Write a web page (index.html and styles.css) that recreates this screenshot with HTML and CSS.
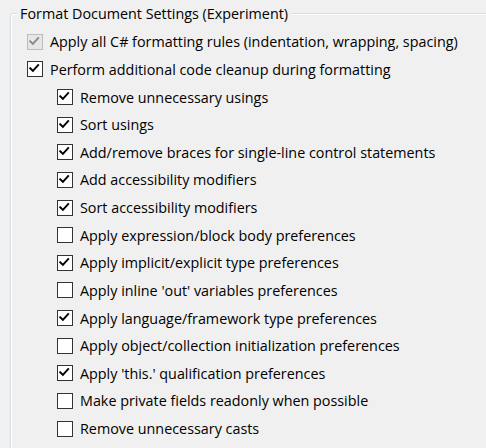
FILE: index.html
```html
<!DOCTYPE html>
<html>
<head>
<meta charset="utf-8">
<link rel="stylesheet" href="styles.css">
</head>
<body>
<fieldset class="group">
  <legend class="group-title">Format Document Settings (Experiment)</legend>
  <div class="row">
    <span class="box disabled"><svg viewBox="0 0 16 16"><path d="M3.5 8.2 L6.6 11.2 L12.6 4.6"/></svg></span>
    <span class="label">Apply all C# formatting rules (indentation, wrapping, spacing)</span>
  </div>
  <div class="row">
    <span class="box"><svg viewBox="0 0 16 16"><path d="M3.5 8.2 L6.6 11.2 L12.6 4.6"/></svg></span>
    <span class="label">Perform additional code cleanup during formatting</span>
  </div>
  <div class="sub">
    <div class="row"><span class="box"><svg viewBox="0 0 16 16"><path d="M3.5 8.2 L6.6 11.2 L12.6 4.6"/></svg></span><span class="label">Remove unnecessary usings</span></div>
    <div class="row"><span class="box"><svg viewBox="0 0 16 16"><path d="M3.5 8.2 L6.6 11.2 L12.6 4.6"/></svg></span><span class="label">Sort usings</span></div>
    <div class="row"><span class="box"><svg viewBox="0 0 16 16"><path d="M3.5 8.2 L6.6 11.2 L12.6 4.6"/></svg></span><span class="label">Add/remove braces for single-line control statements</span></div>
    <div class="row"><span class="box"><svg viewBox="0 0 16 16"><path d="M3.5 8.2 L6.6 11.2 L12.6 4.6"/></svg></span><span class="label">Add accessibility modifiers</span></div>
    <div class="row"><span class="box"><svg viewBox="0 0 16 16"><path d="M3.5 8.2 L6.6 11.2 L12.6 4.6"/></svg></span><span class="label">Sort accessibility modifiers</span></div>
    <div class="row"><span class="box"></span><span class="label">Apply expression/block body preferences</span></div>
    <div class="row"><span class="box"><svg viewBox="0 0 16 16"><path d="M3.5 8.2 L6.6 11.2 L12.6 4.6"/></svg></span><span class="label">Apply implicit/explicit type preferences</span></div>
    <div class="row"><span class="box"></span><span class="label">Apply inline 'out' variables preferences</span></div>
    <div class="row"><span class="box"><svg viewBox="0 0 16 16"><path d="M3.5 8.2 L6.6 11.2 L12.6 4.6"/></svg></span><span class="label">Apply language/framework type preferences</span></div>
    <div class="row"><span class="box"></span><span class="label">Apply object/collection initialization preferences</span></div>
    <div class="row"><span class="box"><svg viewBox="0 0 16 16"><path d="M3.5 8.2 L6.6 11.2 L12.6 4.6"/></svg></span><span class="label">Apply 'this.' qualification preferences</span></div>
    <div class="row"><span class="box"></span><span class="label">Make private fields readonly when possible</span></div>
    <div class="row"><span class="box"></span><span class="label">Remove unnecessary casts</span></div>
  </div>
</fieldset>
</body>
</html>
```
FILE: styles.css
```css
html, body {
  margin: 0;
  padding: 0;
  background: #f0f0f0;
  overflow: hidden;
  width: 486px;
  height: 448px;
}

body {
  font-family: "Open Sans", "Noto Sans", sans-serif;
  font-size: 14.35px;
  color: #000;
}

.group {
  margin: 4px 0 0 10px;
  padding: 5px 0 0 16px;
  width: 520px;
  height: 500px;
  border: 1px solid #d5dfe5;
  border-radius: 3px;
  box-shadow: inset 1px 1px 0 #ffffff;
}

.group-title {
  margin-left: -10px;
  padding: 0 3px;
  line-height: 19px;
  background: #f0f0f0;
}

.row {
  display: flex;
  align-items: center;
  gap: 7px;
  height: 27.64px;
  white-space: nowrap;
}

.sub {
  padding-left: 30px;
}

.box {
  flex: none;
  box-sizing: border-box;
  width: 16px;
  height: 16px;
  border: 1px solid #333333;
  background: #ffffff;
  display: flex;
}

.box svg {
  width: 14px;
  height: 14px;
}

.box path {
  fill: none;
  stroke: #000;
  stroke-width: 2.2;
  stroke-linecap: square;
  stroke-linejoin: miter;
  transform: translate(-1px, -1px);
}

.box.disabled {
  border-color: #bcbcbc;
  background: #e6e6e6;
}

.box.disabled path {
  stroke: #8a8a8a;
}
```
